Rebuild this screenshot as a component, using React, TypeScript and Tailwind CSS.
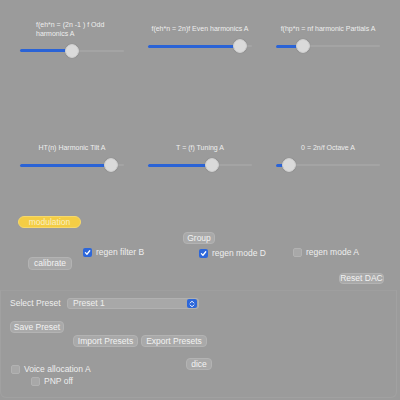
import { ReactElement } from 'react'

type SliderProps = {
	label: string
	value: number
	labelClass?: string
}

const Slider = ({ label, value, labelClass }: SliderProps): ReactElement => {
	// thumb centre runs from 7px to (width - 7px)
	const left = `calc(${value} * (100% - 14px))`
	const fill = `calc(${value} * (100% - 14px) + 7px)`

	return (
		<div className="flex flex-col gap-[6px]">
			<p
				className={
					labelClass ??
					'text-center text-[7px] leading-[9px] whitespace-nowrap'
				}
			>
				{label}
			</p>
			<div className="relative h-[14px]">
				<div className="absolute left-0 right-0 top-[6px] h-[2px] rounded-full bg-[#a4a4a4]" />
				<div
					className="absolute left-0 top-[5.5px] h-[3px] rounded-full bg-[#2a63d6]"
					style={{ width: fill }}
				/>
				<div
					className="absolute top-0 w-[14px] h-[14px] rounded-full bg-[#dadada] border border-[#cfcfcf] shadow-[0_0_1px_rgba(0,0,0,0.25)]"
					style={{ left }}
				/>
			</div>
		</div>
	)
}

const Button = ({ text, className }: { text: string; className: string }): ReactElement => (
	<button
		className={`flex items-center justify-center rounded-[4px] bg-[#a9a9a9] border border-[#b3b3b3] text-[8.5px] leading-none text-[#f2f2f2] ${className}`}
	>
		{text}
	</button>
)

const Checkbox = ({ checked, label, className }: { checked?: boolean; label: string; className?: string }): ReactElement => (
	<div className={`flex items-center gap-[4px] ${className ?? ''}`}>
		{checked ? (
			<span className="flex items-center justify-center w-[9px] h-[9px] rounded-[2px] bg-[#2d67da]">
				<svg width="7" height="7" viewBox="0 0 10 10">
					<path d="M2 5.2 L4.2 7.5 L8.2 2.5" fill="none" stroke="#fff" strokeWidth="1.8" strokeLinecap="round" strokeLinejoin="round" />
				</svg>
			</span>
		) : (
			<span className="w-[9px] h-[9px] rounded-[2px] bg-[#a8a8a8] border border-[#b2b2b2]" />
		)}
		<span className="text-[8.5px] leading-none">{label}</span>
	</div>
)

const App = (): ReactElement => {
	return (
		<div className="w-[400px] h-[400px] overflow-hidden bg-[#9b9b9b] text-[#eeeeee] font-['Liberation_Sans',Arial,sans-serif]">
			<div className="grid grid-cols-3 gap-x-[24px] px-[20px] h-[77px] items-center">
				<Slider
					label="f(eh*n = (2n -1 ) f Odd harmonics A"
					value={0.5}
					labelClass="mx-auto w-[72px] text-left text-[7px] leading-[9px]"
				/>
				<Slider label="f(eh*n = 2n)f Even harmonics A" value={0.94} />
				<Slider label="f(hp*n = nf harmonic Partials A" value={0.22} />
			</div>

			<div className="grid grid-cols-3 gap-x-[24px] px-[20px] mt-[66px] items-center">
				<Slider label="HT(n) Harmonic Tilt A" value={0.93} />
				<Slider label="T = (f) Tuning A" value={0.63} />
				<Slider label="0 = 2n/f Octave A" value={0.07} />
			</div>

			<div className="mt-[44px] ml-[18px] w-[63px] h-[12px] flex items-center justify-center rounded-full bg-[#f4cd45] border border-[#f7d96a] text-[8.5px] leading-none text-[#f8f0c4]">
				modulation
			</div>

			<Button text="Group" className="mt-[4px] ml-[183px] w-[32px] h-[12px]" />

			<div className="flex items-start mt-[3px] h-[23px]">
				<Button text="calibrate" className="mt-[10px] ml-[28px] w-[44px] h-[13px]" />
				<Checkbox checked label="regen filter B" className="ml-[11px] mt-[1px] w-[116px]" />
				<Checkbox checked label="regen mode D" className="mt-[2px] w-[94px]" />
				<Checkbox label="regen mode A" className="mt-[1px]" />
			</div>

			<div className="flex justify-end pr-[16px] mt-[3px]">
				<Button text="Reset DAC" className="w-[45px] h-[11px]" />
			</div>

			<div className="mt-[6px] w-[397px] h-[108px] border border-[#a1a1a1] border-t-[#9f9f9f] rounded-b-[6px] pt-[7px]">
				<div className="flex items-center">
					<span className="ml-[9px] w-[57px] text-[8.5px] leading-none">Select Preset</span>
					<div className="flex items-center justify-between w-[132px] h-[11px] rounded-[3px] bg-[#a8a8a8] border border-[#b1b1b1] pl-[5px] pr-[1px]">
						<span className="text-[8.5px] leading-none">Preset 1</span>
						<span className="flex items-center justify-center w-[10px] h-[9px] rounded-[2px] bg-[#2d67da]">
							<svg width="6" height="8" viewBox="0 0 6 8">
								<path d="M1.2 3 L3 1.2 L4.8 3 M1.2 5 L3 6.8 L4.8 5" fill="none" stroke="#fff" strokeWidth="1" strokeLinecap="round" strokeLinejoin="round" />
							</svg>
						</span>
					</div>
				</div>

				<Button text="Save Preset" className="mt-[12px] ml-[9px] w-[54px] h-[12px]" />

				<div className="flex gap-[3px] mt-[2px] ml-[72px]">
					<Button text="Import Presets" className="w-[65px] h-[12px]" />
					<Button text="Export Presets" className="w-[66px] h-[12px]" />
				</div>

				<div className="flex items-start mt-[11px]">
					<div className="w-[185px] pt-[7px]">
						<Checkbox label="Voice allocation A" className="ml-[10px] gap-[3px]" />
						<Checkbox label="PNP off" className="ml-[30px] mt-[3px] gap-[3px]" />
					</div>
					<Button text="dice" className="w-[26px] h-[12px]" />
				</div>
			</div>
		</div>
	)
}

export default App
